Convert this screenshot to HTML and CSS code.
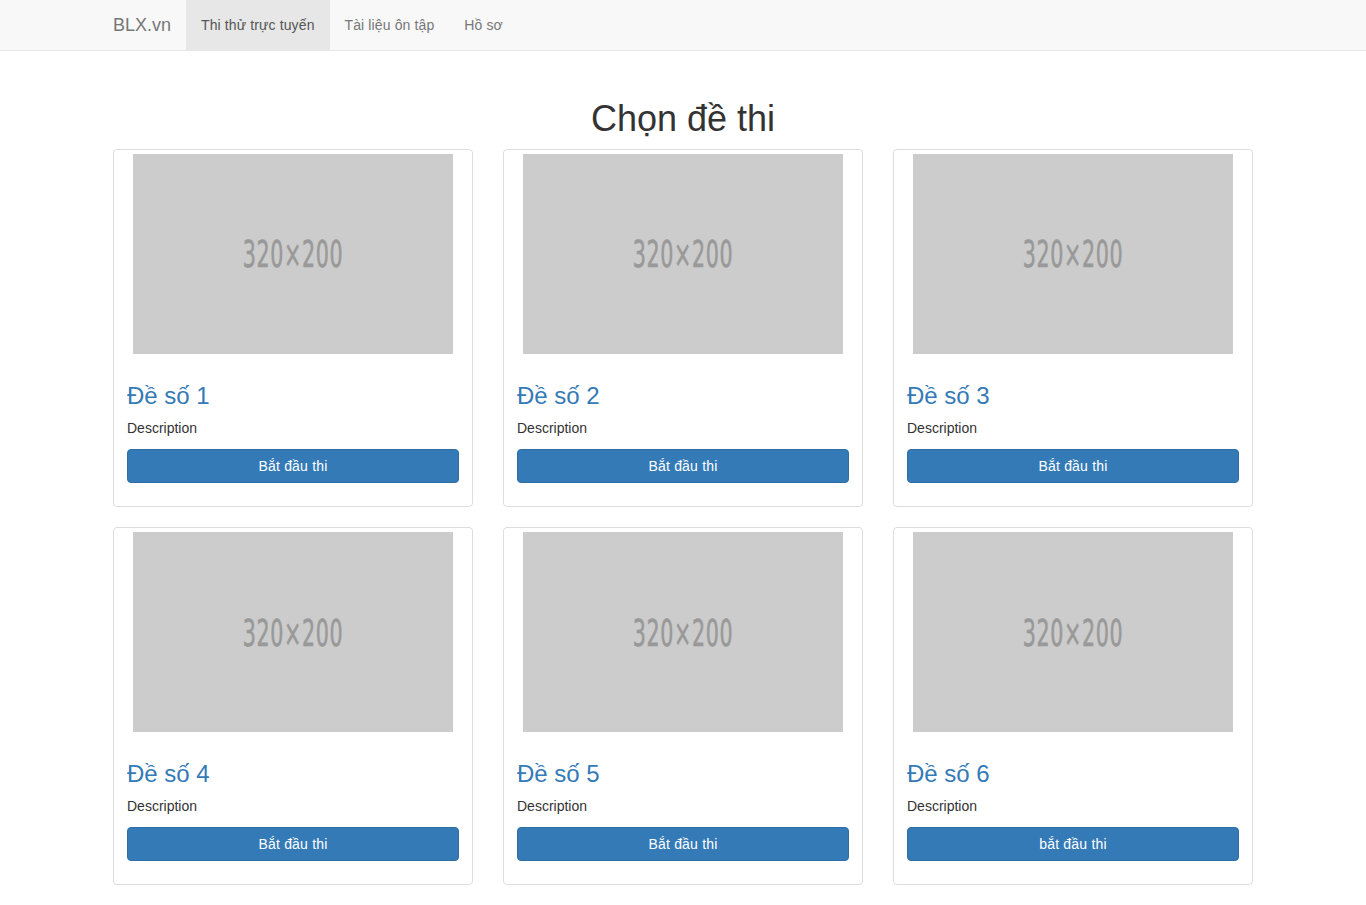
FILE: index.html
```html
<!DOCTYPE html>
<html lang="vi">
<head>
<meta charset="utf-8">
<title>BLX.vn</title>
<link rel="stylesheet" href="styles.css">
</head>
<body>
<nav class="navbar">
  <div class="container nav-inner">
    <a class="brand" href="#">BLX.vn</a>
    <ul class="nav">
      <li class="active"><a href="#">Thi thử trực tuyến</a></li>
      <li><a href="#">Tài liệu ôn tập</a></li>
      <li><a href="#">Hồ sơ</a></li>
    </ul>
  </div>
</nav>
<main class="container">
  <h1 class="title">Chọn đề thi</h1>
  <div class="grid">
    <div class="thumb"><div class="ph"><span>320×200</span></div><div class="caption"><h3><a href="#">Đề số 1</a></h3><p>Description</p><p><a class="btn" href="#">Bắt đầu thi</a></p></div></div>
    <div class="thumb"><div class="ph"><span>320×200</span></div><div class="caption"><h3><a href="#">Đề số 2</a></h3><p>Description</p><p><a class="btn" href="#">Bắt đầu thi</a></p></div></div>
    <div class="thumb"><div class="ph"><span>320×200</span></div><div class="caption"><h3><a href="#">Đề số 3</a></h3><p>Description</p><p><a class="btn" href="#">Bắt đầu thi</a></p></div></div>
    <div class="thumb"><div class="ph"><span>320×200</span></div><div class="caption"><h3><a href="#">Đề số 4</a></h3><p>Description</p><p><a class="btn" href="#">Bắt đầu thi</a></p></div></div>
    <div class="thumb"><div class="ph"><span>320×200</span></div><div class="caption"><h3><a href="#">Đề số 5</a></h3><p>Description</p><p><a class="btn" href="#">Bắt đầu thi</a></p></div></div>
    <div class="thumb"><div class="ph"><span>320×200</span></div><div class="caption"><h3><a href="#">Đề số 6</a></h3><p>Description</p><p><a class="btn" href="#">bắt đầu thi</a></p></div></div>
  </div>
</main>
</body>
</html>
```
FILE: styles.css
```css
* { box-sizing: border-box; }
html, body { margin: 0; padding: 0; }
body {
  font-family: "Liberation Sans", Arial, sans-serif;
  font-size: 14px;
  line-height: 1.42857;
  color: #333;
  background: #fff;
}
a { text-decoration: none; }
.container {
  width: 1170px;
  margin: 0 auto;
  padding: 0 15px;
}
.navbar {
  height: 51px;
  background: #f8f8f8;
  border-bottom: 1px solid #e7e7e7;
}
.nav-inner {
  display: flex;
  align-items: stretch;
  height: 50px;
}
.brand {
  margin-left: -15px;
  padding: 15px;
  font-size: 18px;
  line-height: 20px;
  color: #777;
  height: 50px;
}
.nav {
  display: flex;
  list-style: none;
  margin: 0;
  padding: 0;
}
.nav li a {
  display: block;
  padding: 15px;
  line-height: 20px;
  color: #777;
  height: 50px;
  letter-spacing: 0.12px;
}
.nav li.active a {
  background: #e7e7e7;
  color: #555;
}
.title {
  margin: 48px 0 10px;
  text-align: center;
  font-size: 36px;
  font-weight: 500;
  line-height: 1.1;
  color: #333;
}
.grid {
  display: grid;
  grid-template-columns: repeat(3, 360px);
  column-gap: 30px;
  row-gap: 20px;
}
.thumb {
  border: 1px solid #ddd;
  border-radius: 4px;
  padding: 4px;
  background: #fff;
}
.ph {
  width: 320px;
  height: 200px;
  margin: 0 auto;
  padding-top: 4px;
  background: #ccc;
  display: flex;
  align-items: center;
  justify-content: center;
}
.ph span {
  font-size: 37px;
  color: #999;
  letter-spacing: 1px;
  transform: scaleX(0.62);
  font-family: "DejaVu Sans Condensed", "Liberation Sans", sans-serif;
  font-stretch: condensed;
  font-weight: 500;
  -webkit-text-stroke: 0.6px #999;
}
.caption {
  padding: 9px;
}
.caption h3 {
  margin: 20px 0 10px;
  font-size: 24px;
  font-weight: 500;
  line-height: 1.1;
}
.caption h3 a { color: #337ab7; }
.caption p {
  margin: 0 0 10px;
}
.btn {
  display: block;
  height: 34px;
  padding: 6px 12px;
  text-align: center;
  font-size: 14px;
  line-height: 20px;
  color: #fff;
  background: #337ab7;
  border: 1px solid #2e6da4;
  border-radius: 4px;
  letter-spacing: 0.2px;
}
```
